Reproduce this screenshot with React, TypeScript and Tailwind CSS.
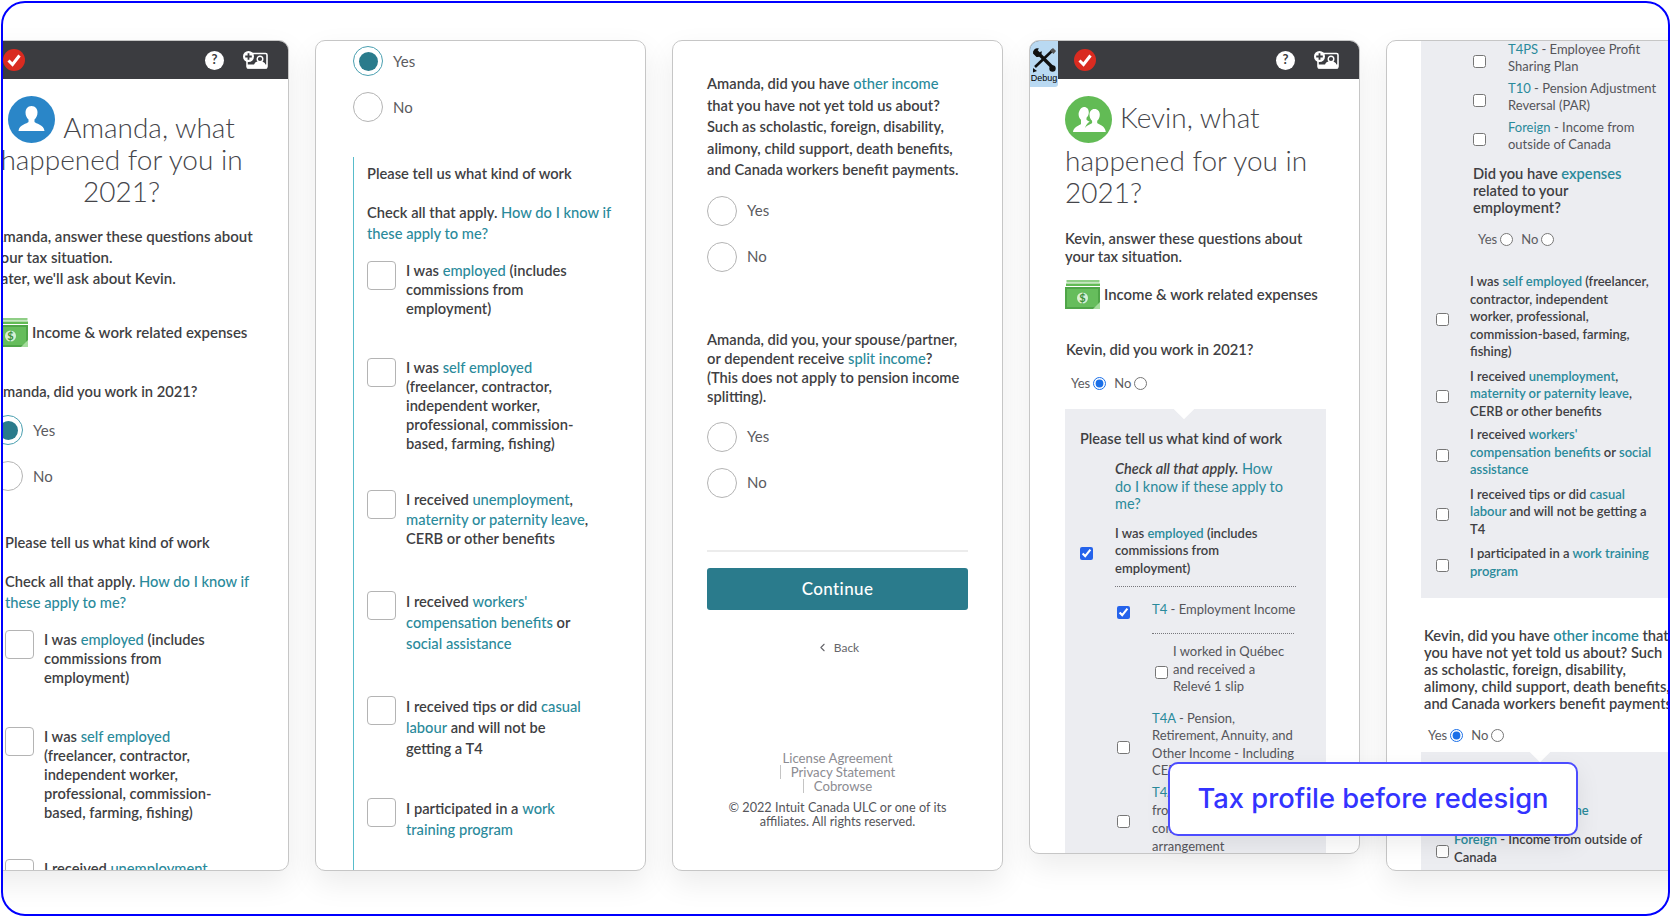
import type { ReactNode } from "react";
import { ChevronLeft } from "lucide-react";

function T({ children }: { children: ReactNode }) {
  return <span className="text-[#2a8a9b]">{children}</span>;
}

// lighter teal link used on the plain white pages
function L({ children }: { children: ReactNode }) {
  return <span className="font-medium text-[#2a8a9b]">{children}</span>;
}

function BrandCheck() {
  return (
    <svg width="22" height="22" viewBox="0 0 22 22">
      <circle cx="11" cy="11" r="11" fill="#d92b20" />
      <path d="M5.500 11.500l4 4 7-9" fill="none" stroke="#fff" strokeWidth="3" />
    </svg>
  );
}

function CameraPlus() {
  return (
    <svg width="25" height="18" viewBox="0 0 25 18">
      <rect x="4" y="2.500" width="20" height="14.500" rx="1.500" fill="#3b3c40" stroke="#fff" strokeWidth="1.600" />
      <rect x="4" y="13.500" width="20" height="4" fill="#fff" />
      <circle cx="17" cy="8" r="2.800" fill="none" stroke="#fff" strokeWidth="1.400" />
      <path d="M11 14c.6-3 2.800-3.400 6-3.400s5 .8 5.600 3.400z" fill="#fff" />
      <circle cx="5.500" cy="5.500" r="5.500" fill="#fff" />
      <path d="M5.500 2.200v6.600M2.200 5.500h6.600" stroke="#3b3c40" strokeWidth="1.800" />
    </svg>
  );
}

function Header({ children }: { children?: ReactNode }) {
  return (
    <div className="flex h-[38px] items-center bg-[#3b3c40] pr-[20px]">
      {children}
      <div className="ml-auto flex items-center gap-[19px]">
        <div className="flex h-[19px] w-[19px] items-center justify-center rounded-full bg-white text-[13px] font-bold text-[#3b3c40]">?</div>
        <CameraPlus />
      </div>
    </div>
  );
}

function Avatar() {
  return (
    <svg width="47" height="47" viewBox="0 0 47 47" className="shrink-0">
      <circle cx="23.500" cy="23.500" r="23.500" fill="#2a86c8" />
      <path d="M23.500 10c4 0 6 3 6 6.500 0 3-1.300 5.500-3 7v2.500c1 1.500 9.500 2.500 10 9H10.500c.5-6.500 9-7.500 10-9v-2.500c-1.700-1.500-3-4-3-7 0-3.500 2-6.500 6-6.500z" fill="#fff" />
    </svg>
  );
}

function CoupleAvatar() {
  return (
    <svg width="47" height="47" viewBox="0 0 47 47" className="shrink-0">
      <circle cx="23.500" cy="23.500" r="23.500" fill="#62bb55" />
      <path d="M19 11c3.200 0 4.800 2.500 4.800 5.200 0 2.400-1 4.300-2.300 5.500v2c.6.800 2 1.300 3.200 2-2.500 1.500-4.700 3.800-5.200 10.300H8c.4-5.500 7-6.500 8-8v-4.300c-1.400-1.200-2.400-3.100-2.400-5.500 0-2.700 2.200-7.200 5.400-7.200z" fill="#fff" />
      <path d="M29.500 13c3.500 0 5.300 2.700 5.300 5.700 0 2.600-1.100 4.800-2.600 6.100v2.200c.9 1.300 8 2.300 8.600 9H18.500c.5-6.700 7.700-7.700 8.600-9v-2.200c-1.500-1.300-2.600-3.500-2.600-6.100 0-3 1.800-5.700 5-5.700z" fill="#fff" />
    </svg>
  );
}

function Money() {
  return (
    <svg width="35" height="29" viewBox="0 0 35 29" className="shrink-0">
      <rect x="1.500" y="0" width="33" height="2.500" fill="#8fce86" />
      <rect x="1" y="3.500" width="34" height="2.500" fill="#62bb55" />
      <rect x="0" y="7" width="35" height="22" fill="#4fa548" />
      <rect x="2" y="9" width="31" height="18" fill="#66bd5c" />
      <circle cx="17.500" cy="18" r="5.500" fill="#d8f0d4" />
      <text x="17.500" y="22" textAnchor="middle" fontSize="11" fontWeight="700" fill="#3f8f3a" fontFamily="Lato, sans-serif">$</text>
      <path d="M28 29l7-7v7z" fill="#a5dc9d" />
    </svg>
  );
}

function BigRadio({ checked, label, className }: { checked?: boolean; label: string; className: string }) {
  return (
    <div className={`flex items-center ${className}`}>
      <div className={`flex h-[30px] w-[30px] items-center justify-center rounded-full border ${checked ? "border-[#4a9fb0]" : "border-[#b4b4b4]"}`}>
        {checked && <div className="h-[19px] w-[19px] rounded-full bg-[#2a7b8c]" />}
      </div>
      <span className="ml-[10px] text-[15px] text-[#5b5b60]">{label}</span>
    </div>
  );
}

const workRows: { lines: ReactNode[]; cls: string }[] = [
  { cls: "mb-[40px] leading-[19px]", lines: [<>I was <L>employed</L> (includes</>, "commissions from", "employment)"] },
  { cls: "mb-[37px] leading-[19px]", lines: [<>I was <L>self employed</L></>, "(freelancer, contractor,", "independent worker,", "professional, commission-", "based, farming, fishing)"] },
  { cls: "mb-[42px] leading-[19.500px]", lines: [<>I received <L>unemployment</L>,</>, <><L>maternity or paternity leave</L>,</>, "CERB or other benefits"] },
  { cls: "mb-[42px] leading-[21px]", lines: [<>I received <L>workers'</L></>, <><L>compensation benefits</L> or</>, <L>social assistance</L>] },
  { cls: "mb-[39px] leading-[21px]", lines: [<>I received tips or did <L>casual</L></>, <><L>labour</L> and will not be</>, "getting a T4"] },
  { cls: "mb-[42px] leading-[21px]", lines: [<>I participated in a <L>work</L></>, <L>training program</L>] },
];

function WorkFollowUp({ blockCls }: { blockCls: string }) {
  return (
    <>
      <BigRadio checked label="Yes" className="mb-[16px]" />
      <BigRadio label="No" />
      <div className={`mt-[35px] border-l border-[#58bccb] pt-[6px] pl-[13px] pb-[100px] font-semibold text-[14.700px] text-[#3f3f43] ${blockCls}`}>
        <p className="leading-[20px]">Please tell us what kind of work</p>
        <p className="mt-[19px] mb-[17px] leading-[21px] whitespace-nowrap">
          Check all that apply. <L>How do I know if</L>
          <br />
          <L>these apply to me?</L>
        </p>
        {workRows.map((row, i) => (
          <div key={i} className={`flex gap-[10px] ${row.cls}`}>
            <div className="h-[29px] w-[29px] shrink-0 rounded-[4px] border border-[#b4b4b4] bg-white" />
            <div className="whitespace-nowrap">
              {row.lines.map((line, j) => (
                <div key={j}>{line}</div>
              ))}
            </div>
          </div>
        ))}
      </div>
    </>
  );
}

function Check({ checked }: { checked?: boolean }) {
  // the boxes sit a little under the middle of their label
  return <input type="checkbox" defaultChecked={checked} className="mt-[6px] mb-0 mx-0 h-[13px] w-[13px] shrink-0 accent-[#2563eb]" />;
}

function YesNo({ yes, className }: { yes?: boolean; className: string }) {
  return (
    <div className={`flex items-center text-[13px] leading-[20px] text-[#5b5b60] ${className}`}>
      Yes
      <input type="radio" defaultChecked={yes} className="mx-[3px] my-0 h-[13px] w-[13px] accent-[#1a6fe8]" />
      <span className="ml-[5px]">No</span>
      <input type="radio" className="mx-[3px] my-0 h-[13px] w-[13px]" />
    </div>
  );
}

function Notch() {
  return <div className="absolute -top-[9px] left-[111px] h-[16px] w-[16px] rotate-45 bg-white" />;
}

function Dotted({ className }: { className: string }) {
  return <div className={`border-t border-dotted border-[#77777c] ${className}`} />;
}

function Card({ children, className }: { children: ReactNode; className: string }) {
  return (
    <div className={`relative w-[331px] shrink-0 overflow-hidden rounded-[10px] border border-[#c6c6c6] bg-white shadow-[0_12px_30px_rgba(0,0,0,0.08)] ${className}`}>
      {children}
    </div>
  );
}

function AmandaCard() {
  return (
    <Card className="h-[831px]">
      <Header>
        <div className="ml-[44px]">
          <BrandCheck />
        </div>
      </Header>
      <div className="pr-[4px] pt-[17px] text-center text-[28px] leading-[32px] font-light text-[#45454a]">
        <div className="flex items-end justify-center gap-[8px]">
          <Avatar />
          <span>Amanda, what</span>
        </div>
        <div className="whitespace-nowrap">happened for you in</div>
        <div>2021?</div>
      </div>
      <div className="pl-[34px] font-semibold text-[#3f3f43]">
        <p className="mt-[19px] text-[15px] leading-[21px] whitespace-nowrap">
          Amanda, answer these questions about
          <br />
          your tax situation.
          <br />
          Later, we'll ask about Kevin.
        </p>
        <div className="mt-[29px] flex items-center gap-[4px] text-[15px]">
          <Money />
          <span>Income &amp; work related expenses</span>
        </div>
        <p className="mt-[34px] text-[14.700px] leading-[20px]">Amanda, did you work in 2021?</p>
        <div className="mt-[14px] font-normal">
          <WorkFollowUp blockCls="-ml-[2px]" />
        </div>
      </div>
    </Card>
  );
}

function TypesCard() {
  return (
    <Card className="h-[831px]">
      <div className="pt-[5px] pl-[37px]">
        <WorkFollowUp blockCls="ml-0" />
      </div>
    </Card>
  );
}

function OtherIncomeCard() {
  return (
    <Card className="h-[831px]">
      <div className="w-[295px] pt-[32px] pl-[34px] font-semibold text-[14.700px] text-[#3f3f43]">
        <p className="leading-[21.500px] whitespace-nowrap">
          Amanda, did you have <L>other income</L>
          <br />
          that you have not yet told us about?
          <br />
          Such as scholastic, foreign, disability,
          <br />
          alimony, child support, death benefits,
          <br />
          and Canada workers benefit payments.
        </p>
        <div className="font-normal">
          <BigRadio label="Yes" className="mt-[15px]" />
          <BigRadio label="No" className="mt-[16px]" />
        </div>
        <p className="mt-[58px] leading-[19px] whitespace-nowrap">
          Amanda, did you, your spouse/partner,
          <br />
          or dependent receive <L>split income</L>?
          <br />
          (This does not apply to pension income
          <br />
          splitting).
        </p>
        <div className="font-normal">
          <BigRadio label="Yes" className="mt-[16px]" />
          <BigRadio label="No" className="mt-[16px]" />
        </div>
        <div className="mt-[52px] h-[2px] bg-[#ececec]" />
        <button className="mt-[16px] h-[42px] w-full rounded-[3px] bg-[#2a7b8c] text-[17px] font-medium tracking-[0.4px] text-white">Continue</button>
        <div className="mt-[30px] flex items-center justify-center gap-[5px] text-[12px] leading-[16px] font-normal text-[#66666b]">
          <ChevronLeft size={13} />
          <span>Back</span>
        </div>
        <div className="mt-[95px] text-center text-[13.200px] leading-[14px] font-normal text-[#8c8c92]">
          <div>License Agreement</div>
          <div className="flex justify-center">
            <span className="mr-[10px] border-l border-[#c4c4c4]" />
            <span>Privacy Statement</span>
          </div>
          <div className="flex justify-center">
            <span className="mr-[10px] border-l border-[#c4c4c4]" />
            <span>Cobrowse</span>
          </div>
          <p className="mt-[7px] text-[12.700px] leading-[14.500px] whitespace-nowrap text-[#55555a]">
            © 2022 Intuit Canada ULC or one of its
            <br />
            affiliates. All rights reserved.
          </p>
        </div>
      </div>
    </Card>
  );
}

function PanelRow({ check, left, gap, cls, children }: { check?: boolean; left: string; gap: string; cls: string; children: ReactNode }) {
  return (
    <div className={`flex items-center whitespace-nowrap ${left} ${gap} ${cls}`}>
      <Check checked={check} />
      <div>{children}</div>
    </div>
  );
}

function KevinCard() {
  return (
    <Card className="h-[814px]">
      <Header>
        <div className="ml-[44px]">
          <BrandCheck />
        </div>
      </Header>
      <div className="absolute top-0 left-0 flex h-[46px] w-[28px] flex-col items-center rounded-br-[3px] bg-[#b9d9f2]">
        <svg width="26" height="26" viewBox="0 0 26 26" className="mt-[6px]">
          <path d="M4 3l19 19" stroke="#111" strokeWidth="3.400" />
          <circle cx="21.500" cy="21.500" r="3.200" fill="#111" />
          <path d="M2 6.500a4.500 4.500 0 0 1 6-5l-2.500 3 2 2 3-2.500a4.500 4.500 0 0 1-5 6z" fill="#111" />
          <path d="M22 3L4 20" stroke="#111" strokeWidth="2.600" />
          <path d="M2 21l4 3-4 1.500z" fill="#111" />
          <path d="M19 3.500l3-2.500 3 3-2.500 3z" fill="#555" />
        </svg>
        <span className="text-[9px] leading-[10px] text-black font-[family-name:Liberation_Sans,sans-serif]">Debug</span>
      </div>
      <div className="pl-[35px]">
        <div className="pt-[17px] text-[28px] leading-[32px] font-light text-[#45454a]">
          <div className="flex items-center gap-[8px]">
            <CoupleAvatar />
            <span className="-mt-[5px]">Kevin, what</span>
          </div>
          <div className="mt-[1px] whitespace-nowrap">happened for you in</div>
          <div>2021?</div>
        </div>
        <div className="w-[261px] font-semibold text-[#3f3f43]">
          <p className="mt-[21px] text-[14.700px] leading-[18px] whitespace-nowrap">
            Kevin, answer these questions about
            <br />
            your tax situation.
          </p>
          <div className="mt-[15px] flex items-center gap-[4px] text-[14.900px] whitespace-nowrap">
            <Money />
            <span>Income &amp; work related expenses</span>
          </div>
          <p className="mt-[30px] ml-[1px] text-[14.700px] leading-[20px]">Kevin, did you work in 2021?</p>
          <YesNo yes className="mt-[14px] ml-[6px] font-normal" />
          <div className="relative mt-[16px] h-[450px] bg-[#ecedf1] text-[13px]">
            <Notch />
            <p className="ml-[15px] pt-[20px] text-[14.500px] leading-[20px]">Please tell us what kind of work</p>
            <p className="mt-[11px] ml-[50px] text-[14.500px] leading-[17.500px]">
              <em>Check all that apply.</em> <span className="font-normal"><T>How</T></span>
              <br />
              <span className="font-normal"><T>do I know if these apply to</T></span>
              <br />
              <span className="font-normal"><T>me?</T></span>
            </p>
            <PanelRow check left="ml-[15px]" gap="gap-[22px]" cls="mt-[12px] leading-[17.500px]">
              I was <T>employed</T> (includes
              <br />
              commissions from
              <br />
              employment)
            </PanelRow>
            <Dotted className="mt-[9px] ml-[50px] w-[181px]" />
            <div className="font-normal text-[#55555a]">
              <PanelRow check left="ml-[52px]" gap="gap-[22px]" cls="mt-[13px] items-start leading-[18px]">
                <T>T4</T> - Employment Income
              </PanelRow>
              <Dotted className="mt-[14px] ml-[87px] w-[142px]" />
              <PanelRow left="ml-[90px]" gap="gap-[5px]" cls="mt-[9px] leading-[17.500px]">
                I worked in Québec
                <br />
                and received a
                <br />
                Relevé 1 slip
              </PanelRow>
              <PanelRow left="ml-[52px]" gap="gap-[22px]" cls="mt-[14px] leading-[17.500px]">
                <T>T4A</T> - Pension,
                <br />
                Retirement, Annuity, and
                <br />
                Other Income - Including
                <br />
                CERB
              </PanelRow>
              <PanelRow left="ml-[52px]" gap="gap-[22px]" cls="mt-[3px] leading-[18px]">
                <T>T4A</T> - Self-employed
                <br />
                from contract or
                <br />
                commission
                <br />
                arrangement
              </PanelRow>
            </div>
          </div>
        </div>
      </div>
    </Card>
  );
}

function TopRow({ first, children }: { first?: boolean; children: ReactNode }) {
  return (
    <PanelRow left="ml-[52px]" gap="gap-[22px]" cls={`mb-[3px] h-[36px] font-normal text-[#55555a] leading-[17.500px] ${first ? "-mt-[1px]" : "mt-0"}`}>
      {children}
    </PanelRow>
  );
}

function LastCard() {
  return (
    <Card className="h-[831px]">
      <div className="pl-[34px] font-semibold text-[#3f3f43] text-[13px]">
        <div className="w-[261px] bg-[#ecedf1] pb-[18px]">
          <TopRow first>
            <T>T4PS</T> - Employee Profit
            <br />
            Sharing Plan
          </TopRow>
          <TopRow>
            <T>T10</T> - Pension Adjustment
            <br />
            Reversal (PAR)
          </TopRow>
          <TopRow>
            <T>Foreign</T> - Income from
            <br />
            outside of Canada
          </TopRow>
          <p className="mt-[11px] ml-[52px] text-[14.700px] leading-[17px]">
            Did you have <T>expenses</T>
            <br />
            related to your
            <br />
            employment?
          </p>
          <YesNo className="mt-[13px] ml-[57px] font-normal" />
          <PanelRow left="ml-[15px]" gap="gap-[21px]" cls="mt-[24px] leading-[17.500px]">
            I was <T>self employed</T> (freelancer,
            <br />
            contractor, independent
            <br />
            worker, professional,
            <br />
            commission-based, farming,
            <br />
            fishing)
          </PanelRow>
          <PanelRow left="ml-[15px]" gap="gap-[21px]" cls="mt-[7px] leading-[17.500px]">
            I received <T>unemployment</T>,
            <br />
            <T>maternity or paternity leave</T>,
            <br />
            CERB or other benefits
          </PanelRow>
          <PanelRow left="ml-[15px]" gap="gap-[21px]" cls="mt-[6px] leading-[17.500px]">
            I received <T>workers'</T>
            <br />
            <T>compensation benefits</T> or <T>social</T>
            <br />
            <T>assistance</T>
          </PanelRow>
          <PanelRow left="ml-[15px]" gap="gap-[21px]" cls="mt-[7px] leading-[17.500px]">
            I received tips or did <T>casual</T>
            <br />
            <T>labour</T> and will not be getting a
            <br />
            T4
          </PanelRow>
          <PanelRow left="ml-[15px]" gap="gap-[21px]" cls="mt-[7px] leading-[17.500px]">
            I participated in a <T>work training</T>
            <br />
            <T>program</T>
          </PanelRow>
        </div>
        <p className="mt-[29px] ml-[3px] text-[14.700px] leading-[17px] whitespace-nowrap">
          Kevin, did you have <T>other income</T> that
          <br />
          you have not yet told us about? Such
          <br />
          as scholastic, foreign, disability,
          <br />
          alimony, child support, death benefits,
          <br />
          and Canada workers benefit payments.
        </p>
        <YesNo yes className="mt-[13px] ml-[7px] font-normal" />
        <div className="relative mt-[7px] h-[130px] w-[261px] bg-[#ecedf1]">
          <Notch />
          <p className="pt-[21px] pl-[33px] leading-[18px] whitespace-nowrap text-[#55555a]">Check all that apply.</p>
          <p className="mt-[10px] pl-[50px] leading-[18px] whitespace-nowrap"><T>Employment Income</T></p>
          <PanelRow left="ml-[15px]" gap="gap-[5px]" cls="mt-[11px] leading-[18px]">
            <T>Foreign</T> - Income from outside of
            <br />
            Canada
          </PanelRow>
        </div>
      </div>
    </Card>
  );
}

export default function App() {
  return (
    <div className="h-[917px] w-[1671px] bg-white p-px font-[family-name:Lato,sans-serif]">
      <div className="relative h-[915px] w-[1669px] overflow-hidden rounded-[24px] border-2 border-[#0000ff]">
        <div className="-ml-[45px] flex items-start gap-[26px] pt-[37px]">
          <AmandaCard />
          <TypesCard />
          <OtherIncomeCard />
          <KevinCard />
          <LastCard />
        </div>
        <div className="absolute top-[759px] left-[1165px] flex h-[74px] w-[410px] items-center justify-center rounded-[10px] border-2 border-[#4c4cff] bg-white text-[27.300px] font-medium text-[#3333ff] shadow-[0_8px_24px_rgba(0,0,0,0.08)] font-[family-name:Inter,sans-serif]">
          Tax profile before redesign
        </div>
      </div>
    </div>
  );
}
